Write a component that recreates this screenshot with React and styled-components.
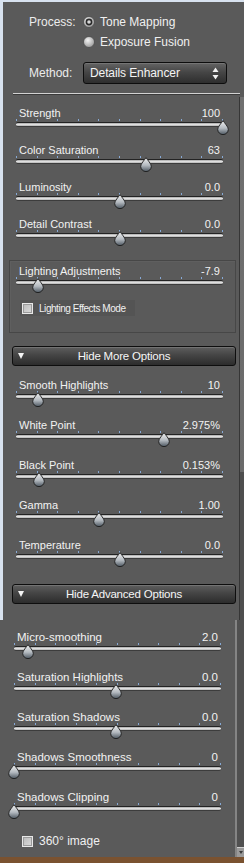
import React from "react";
import styled, { createGlobalStyle } from "styled-components";

const GlobalStyle = createGlobalStyle`
  html, body {
    margin: 0;
    padding: 0;
    background: #5a5a5a;
  }
  body {
    font-family: "Liberation Sans", Arial, sans-serif;
    color: #f0f0f0;
  }
`;

const Frame = styled.div`
  width: 244px;
  height: 863px;
  display: flex;
  flex-direction: column;
  overflow: hidden;
  background: #5a5a5a;
`;

const Upper = styled.div`
  height: 620px;
  box-sizing: border-box;
  border-top: 2px solid #d8e2ef;
  border-left: 3px solid #d8e2ef;
  display: flex;
  flex-direction: column;
`;

const Header = styled.div`
  padding: 10px 0 0 26px;
  display: flex;
  flex-direction: column;
  font-size: 12px;
`;

const ProcessGrid = styled.div`
  display: grid;
  grid-template-columns: 54px auto;
  grid-template-rows: 20px 20px;
  align-items: center;
`;

const HeadLabel = styled.div`
  color: #ececec;
`;

const RadioItem = styled.label`
  display: flex;
  align-items: center;
  gap: 5px;
  color: #f0f0f0;
`;

const MethodRow = styled.div`
  display: grid;
  grid-template-columns: 54px 144px;
  align-items: center;
  margin-top: 10px;
  height: 22px;
`;

const Select = styled.div`
  height: 22px;
  box-sizing: border-box;
  border: 1px solid #0d0d0d;
  border-radius: 3px;
  background: linear-gradient(#646464, #464646 45%, #2e2e2e);
  box-shadow: inset 0 1px 0 rgba(255, 255, 255, 0.12);
  display: flex;
  align-items: center;
  justify-content: space-between;
  padding: 0 7px 0 6px;
  font-size: 12px;
  color: #f4f4f4;
  letter-spacing: -0.1px;
`;

const Separator = styled.div`
  margin: 9px 0 0 10px;
  width: 227px;
  height: 1px;
  background: #d2d2d2;
  border-bottom: 1px solid #3a3a3a;
`;

const UpperBody = styled.div`
  flex: 1;
  display: flex;
`;

const Content = styled.div`
  flex: 1;
  display: flex;
  flex-direction: column;
  padding-top: ${(p) => p.$top}px;
`;

const ScrollBar = styled.div`
  width: 4px;
  margin-top: 2px;
  border-left: 1px solid #363636;
  background: linear-gradient(#707070, #6a6a6a) top / 100% 375px no-repeat, #4e4e4e;
`;

const Group = styled.div`
  display: flex;
  flex-direction: column;
  gap: ${(p) => p.$gap}px;
  margin-top: ${(p) => p.$mt || 0}px;
`;

const SliderWrap = styled.div`
  width: 207px;
  margin-left: ${(p) => p.$ml}px;
  height: 30px;
  display: flex;
  flex-direction: column;
`;

const SliderHead = styled.div`
  height: 14px;
  line-height: 14px;
  display: flex;
  justify-content: space-between;
  padding: 0 3px;
  font-size: ${(p) => p.$fs}px;
  color: #f2f2f2;
  white-space: nowrap;
`;

const TrackArea = styled.div`
  position: relative;
  height: 16px;
`;

const Ticks = styled.div`
  position: absolute;
  left: 0;
  right: 0;
  top: -1px;
  height: 2px;
  display: flex;
  justify-content: space-between;
  span {
    width: 1px;
    height: 2px;
    background: #86a9d6;
  }
`;

const Track = styled.div`
  position: absolute;
  left: 0;
  right: 0;
  top: 2px;
  height: 3px;
  border-top: 1px solid #232323;
  border-bottom: 1px solid #3c3c3c;
  border-radius: 2px;
  background: linear-gradient(#a8a8a8, #e4e4e4 55%, #b0b0b0);
`;

const Thumb = styled.svg`
  position: absolute;
  top: 0;
  left: calc(${(p) => p.$pct}% - 6px);
  width: 12px;
  height: 15px;
`;

const Box = styled.div`
  margin: 13px 0 0 6px;
  width: 227px;
  box-sizing: border-box;
  border: 1px solid #474747;
  box-shadow: inset 1px 1px 0 #5f5f5f;
  padding: 3px 0 16px 0;
  display: flex;
  flex-direction: column;
`;

const CheckRow = styled.label`
  display: flex;
  align-items: center;
  gap: ${(p) => p.$gap}px;
  height: 16px;
  margin: ${(p) => p.$mt}px 0 0 ${(p) => p.$ml}px;
  width: ${(p) => (p.$w ? `${p.$w}px` : "auto")};
  padding-left: ${(p) => p.$pl || 0}px;
  box-sizing: border-box;
  background: ${(p) => p.$bg || "transparent"};
  font-size: ${(p) => p.$fs}px;
  letter-spacing: ${(p) => (p.$narrow ? "-0.45px" : "0")};
  font-family: ${(p) =>
    p.$narrow
      ? `"Liberation Sans Narrow", "Liberation Sans", Arial, sans-serif`
      : `"Liberation Sans", Arial, sans-serif`};
  color: #f0f0f0;
  white-space: nowrap;
`;

const CheckBox = styled.span`
  width: 11px;
  height: 11px;
  box-sizing: border-box;
  border: 1px solid #e8e8e8;
  background: linear-gradient(135deg, #b9b9b9, #dcdcdc);
  box-shadow: inset 0 0 0 1px #9a9a9a;
  flex: none;
`;

const ToggleButton = styled.div`
  margin: ${(p) => p.$mt}px 0 0 9px;
  width: 224px;
  height: 20px;
  box-sizing: border-box;
  border: 1px solid #0e0e0e;
  border-radius: 3px;
  background: linear-gradient(#5e5e5e, #454545 45%, #2c2c2c);
  box-shadow: inset 0 1px 0 rgba(255, 255, 255, 0.14);
  position: relative;
  display: flex;
  align-items: center;
  justify-content: center;
  font-size: 11.5px;
  color: #f6f6f6;
  letter-spacing: -0.2px;
`;

const ButtonArrow = styled.span`
  position: absolute;
  left: 5px;
  top: 6px;
  width: 0;
  height: 0;
  border-left: 3.5px solid transparent;
  border-right: 3.5px solid transparent;
  border-top: 6px solid #f4f4f4;
`;

const Lower = styled.div`
  height: 237px;
  display: flex;
  background: #5a5a5a;
`;

const LowerScroll = styled.div`
  width: 7px;
  margin-left: 1px;
  border-left: 2px solid #858585;
  background: #505050;
  display: flex;
  flex-direction: column;
  justify-content: flex-end;
`;

const ScrollArrow = styled.div`
  height: 9px;
  background: #9a9a9a;
  border-top: 1px solid #d0d0d0;
  display: flex;
  align-items: center;
  justify-content: center;
  &::after {
    content: "";
    border-left: 2px solid transparent;
    border-right: 2px solid transparent;
    border-top: 3px solid #3a3a3a;
  }
`;

const BottomBar = styled.div`
  height: 6px;
  background: #7a5230;
`;

const Radio = ({ checked }) => (
  <svg width="12" height="12" viewBox="0 0 12 12">
    <defs>
      <radialGradient id={checked ? "rOn" : "rOff"} cx="40%" cy="35%" r="65%">
        <stop offset="0" stopColor="#f4f4f4" />
        <stop offset="1" stopColor="#9c9c9c" />
      </radialGradient>
    </defs>
    <circle cx="6" cy="6" r="5.5" fill={`url(#${checked ? "rOn" : "rOff"})`} stroke="#4a4a4a" strokeWidth="0.8" />
    {checked && <circle cx="6" cy="6" r="2.6" fill="#d8d8d8" stroke="#2a2a2a" strokeWidth="1.6" />}
  </svg>
);

const SelectArrows = () => (
  <svg width="7" height="13" viewBox="0 0 7 13">
    <path d="M3.5 0.5 L6.5 5 H0.5 Z" fill="#f2f2f2" />
    <path d="M3.5 12.5 L6.5 8 H0.5 Z" fill="#f2f2f2" />
  </svg>
);

const ThumbIcon = ({ pct }) => (
  <Thumb $pct={pct} viewBox="0 0 12 15">
    <defs>
      <linearGradient id="thumbFill" x1="0" y1="0" x2="0" y2="1">
        <stop offset="0" stopColor="#f2f2f2" />
        <stop offset="0.55" stopColor="#b4bac0" />
        <stop offset="1" stopColor="#4c5660" />
      </linearGradient>
    </defs>
    <path
      d="M6 0.6 C7.5 3 11.3 6.8 11.3 9.3 A5.3 5.3 0 0 1 0.7 9.3 C0.7 6.8 4.5 3 6 0.6 Z"
      fill="url(#thumbFill)"
      stroke="#1c1c1c"
      strokeWidth="0.9"
    />
  </Thumb>
);

const TICKS = Array.from({ length: 11 });

const Slider = ({ label, value, pct, ml = 13, fs = 11 }) => (
  <SliderWrap $ml={ml}>
    <SliderHead $fs={fs}>
      <span>{label}</span>
      <span>{value}</span>
    </SliderHead>
    <TrackArea>
      <Ticks>
        {TICKS.map((_, i) => (
          <span key={i} />
        ))}
      </Ticks>
      <Track />
      <ThumbIcon pct={pct} />
    </TrackArea>
  </SliderWrap>
);

const group1 = [
  { label: "Strength", value: "100", pct: 100 },
  { label: "Color Saturation", value: "63", pct: 63 },
  { label: "Luminosity", value: "0.0", pct: 50 },
  { label: "Detail Contrast", value: "0.0", pct: 50 },
];

const group2 = [
  { label: "Smooth Highlights", value: "10", pct: 10.5 },
  { label: "White Point", value: "2.975%", pct: 71.5 },
  { label: "Black Point", value: "0.153%", pct: 11.3 },
  { label: "Gamma", value: "1.00", pct: 40 },
  { label: "Temperature", value: "0.0", pct: 50 },
];

const group3 = [
  { label: "Micro-smoothing", value: "2.0", pct: 7 },
  { label: "Saturation Highlights", value: "0.0", pct: 49.5 },
  { label: "Saturation Shadows", value: "0.0", pct: 49.5 },
  { label: "Shadows Smoothness", value: "0", pct: 0 },
  { label: "Shadows Clipping", value: "0", pct: 0 },
];

export default function App() {
  return (
    <>
      <GlobalStyle />
      <Frame>
        <Upper>
          <Header>
            <ProcessGrid>
              <HeadLabel>Process:</HeadLabel>
              <RadioItem>
                <Radio checked />
                Tone Mapping
              </RadioItem>
              <span />
              <RadioItem>
                <Radio />
                Exposure Fusion
              </RadioItem>
            </ProcessGrid>
            <MethodRow>
              <HeadLabel>Method:</HeadLabel>
              <Select>
                <span>Details Enhancer</span>
                <SelectArrows />
              </Select>
            </MethodRow>
          </Header>
          <Separator />
          <UpperBody>
            <Content $top={11}>
              <Group $gap={7}>
                {group1.map((s) => (
                  <Slider key={s.label} {...s} />
                ))}
              </Group>
              <Box>
                <Slider label="Lighting Adjustments" value="-7.9" pct={10.6} ml={6} />
                <CheckRow $mt={6} $ml={10} $w={115} $pl={2} $gap={6} $bg="#545454" $fs={10} $narrow>
                  <CheckBox />
                  Lighting Effects Mode
                </CheckRow>
              </Box>
              <ToggleButton $mt={13}>
                <ButtonArrow />
                Hide More Options
              </ToggleButton>
              <Group $gap={10} $mt={12}>
                {group2.map((s) => (
                  <Slider key={s.label} {...s} />
                ))}
              </Group>
              <ToggleButton $mt={16}>
                <ButtonArrow />
                Hide Advanced Options
              </ToggleButton>
            </Content>
            <ScrollBar />
          </UpperBody>
        </Upper>
        <Lower>
          <Content $top={10}>
            <Group $gap={10}>
              {group3.map((s) => (
                <Slider key={s.label} {...s} ml={14} fs={11.5} />
              ))}
            </Group>
            <CheckRow $mt={13} $ml={22} $gap={6} $fs={12}>
              <CheckBox />
              360° image
            </CheckRow>
          </Content>
          <LowerScroll>
            <ScrollArrow />
          </LowerScroll>
        </Lower>
        <BottomBar />
      </Frame>
    </>
  );
}
